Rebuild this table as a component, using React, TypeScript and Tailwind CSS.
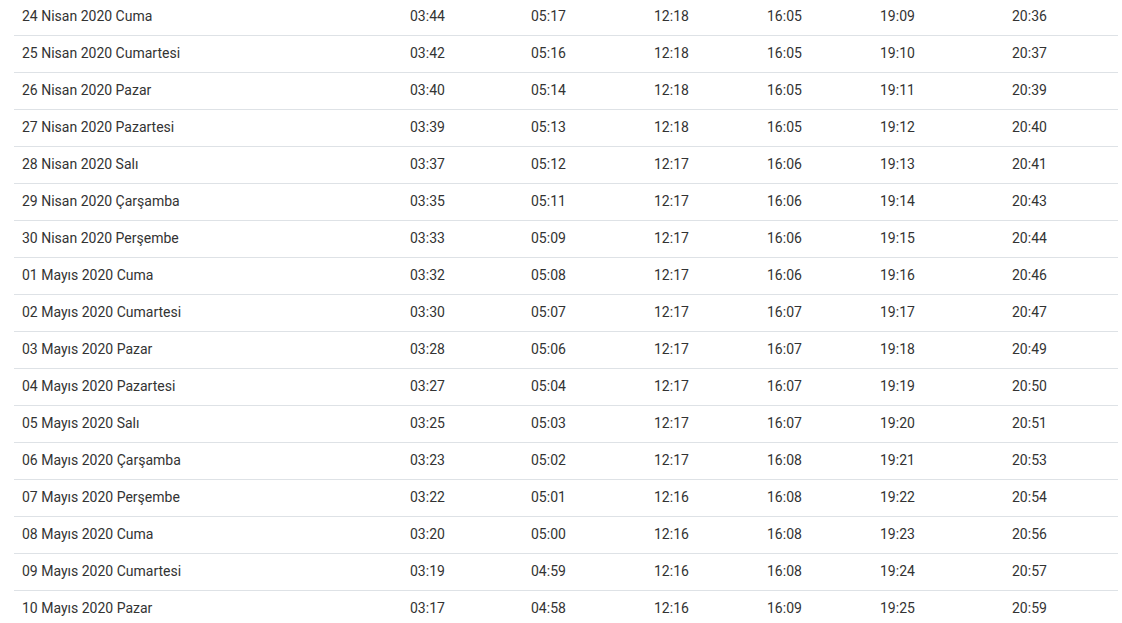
import React from "react";

interface PrayerRow {
  date: string;
  times: string[];
}

const rows: PrayerRow[] = [
  { date: "24 Nisan 2020 Cuma", times: ["03:44", "05:17", "12:18", "16:05", "19:09", "20:36"] },
  { date: "25 Nisan 2020 Cumartesi", times: ["03:42", "05:16", "12:18", "16:05", "19:10", "20:37"] },
  { date: "26 Nisan 2020 Pazar", times: ["03:40", "05:14", "12:18", "16:05", "19:11", "20:39"] },
  { date: "27 Nisan 2020 Pazartesi", times: ["03:39", "05:13", "12:18", "16:05", "19:12", "20:40"] },
  { date: "28 Nisan 2020 Salı", times: ["03:37", "05:12", "12:17", "16:06", "19:13", "20:41"] },
  { date: "29 Nisan 2020 Çarşamba", times: ["03:35", "05:11", "12:17", "16:06", "19:14", "20:43"] },
  { date: "30 Nisan 2020 Perşembe", times: ["03:33", "05:09", "12:17", "16:06", "19:15", "20:44"] },
  { date: "01 Mayıs 2020 Cuma", times: ["03:32", "05:08", "12:17", "16:06", "19:16", "20:46"] },
  { date: "02 Mayıs 2020 Cumartesi", times: ["03:30", "05:07", "12:17", "16:07", "19:17", "20:47"] },
  { date: "03 Mayıs 2020 Pazar", times: ["03:28", "05:06", "12:17", "16:07", "19:18", "20:49"] },
  { date: "04 Mayıs 2020 Pazartesi", times: ["03:27", "05:04", "12:17", "16:07", "19:19", "20:50"] },
  { date: "05 Mayıs 2020 Salı", times: ["03:25", "05:03", "12:17", "16:07", "19:20", "20:51"] },
  { date: "06 Mayıs 2020 Çarşamba", times: ["03:23", "05:02", "12:17", "16:08", "19:21", "20:53"] },
  { date: "07 Mayıs 2020 Perşembe", times: ["03:22", "05:01", "12:16", "16:08", "19:22", "20:54"] },
  { date: "08 Mayıs 2020 Cuma", times: ["03:20", "05:00", "12:16", "16:08", "19:23", "20:56"] },
  { date: "09 Mayıs 2020 Cumartesi", times: ["03:19", "04:59", "12:16", "16:08", "19:24", "20:57"] },
  { date: "10 Mayıs 2020 Pazar", times: ["03:17", "04:58", "12:16", "16:09", "19:25", "20:59"] },
];

const App = () => {
  return (
    <div className="w-full h-[623px] overflow-hidden bg-white font-['Roboto',sans-serif] text-[14px] text-[#333]">
      <div className="ml-[14px] w-[1104px] mt-[-1px]">
        {rows.map((row) => (
          <div
            key={row.date}
            className="grid grid-cols-[388px_121px_123px_113px_113px_132px_114px] h-[37px] pb-[2px] items-center border-b border-[#dee2e6]"
          >
            <div className="px-2">{row.date}</div>
            {row.times.map((t, i) => (
              <div key={i} className="px-2">
                {t}
              </div>
            ))}
          </div>
        ))}
      </div>
    </div>
  );
};

export default App;
